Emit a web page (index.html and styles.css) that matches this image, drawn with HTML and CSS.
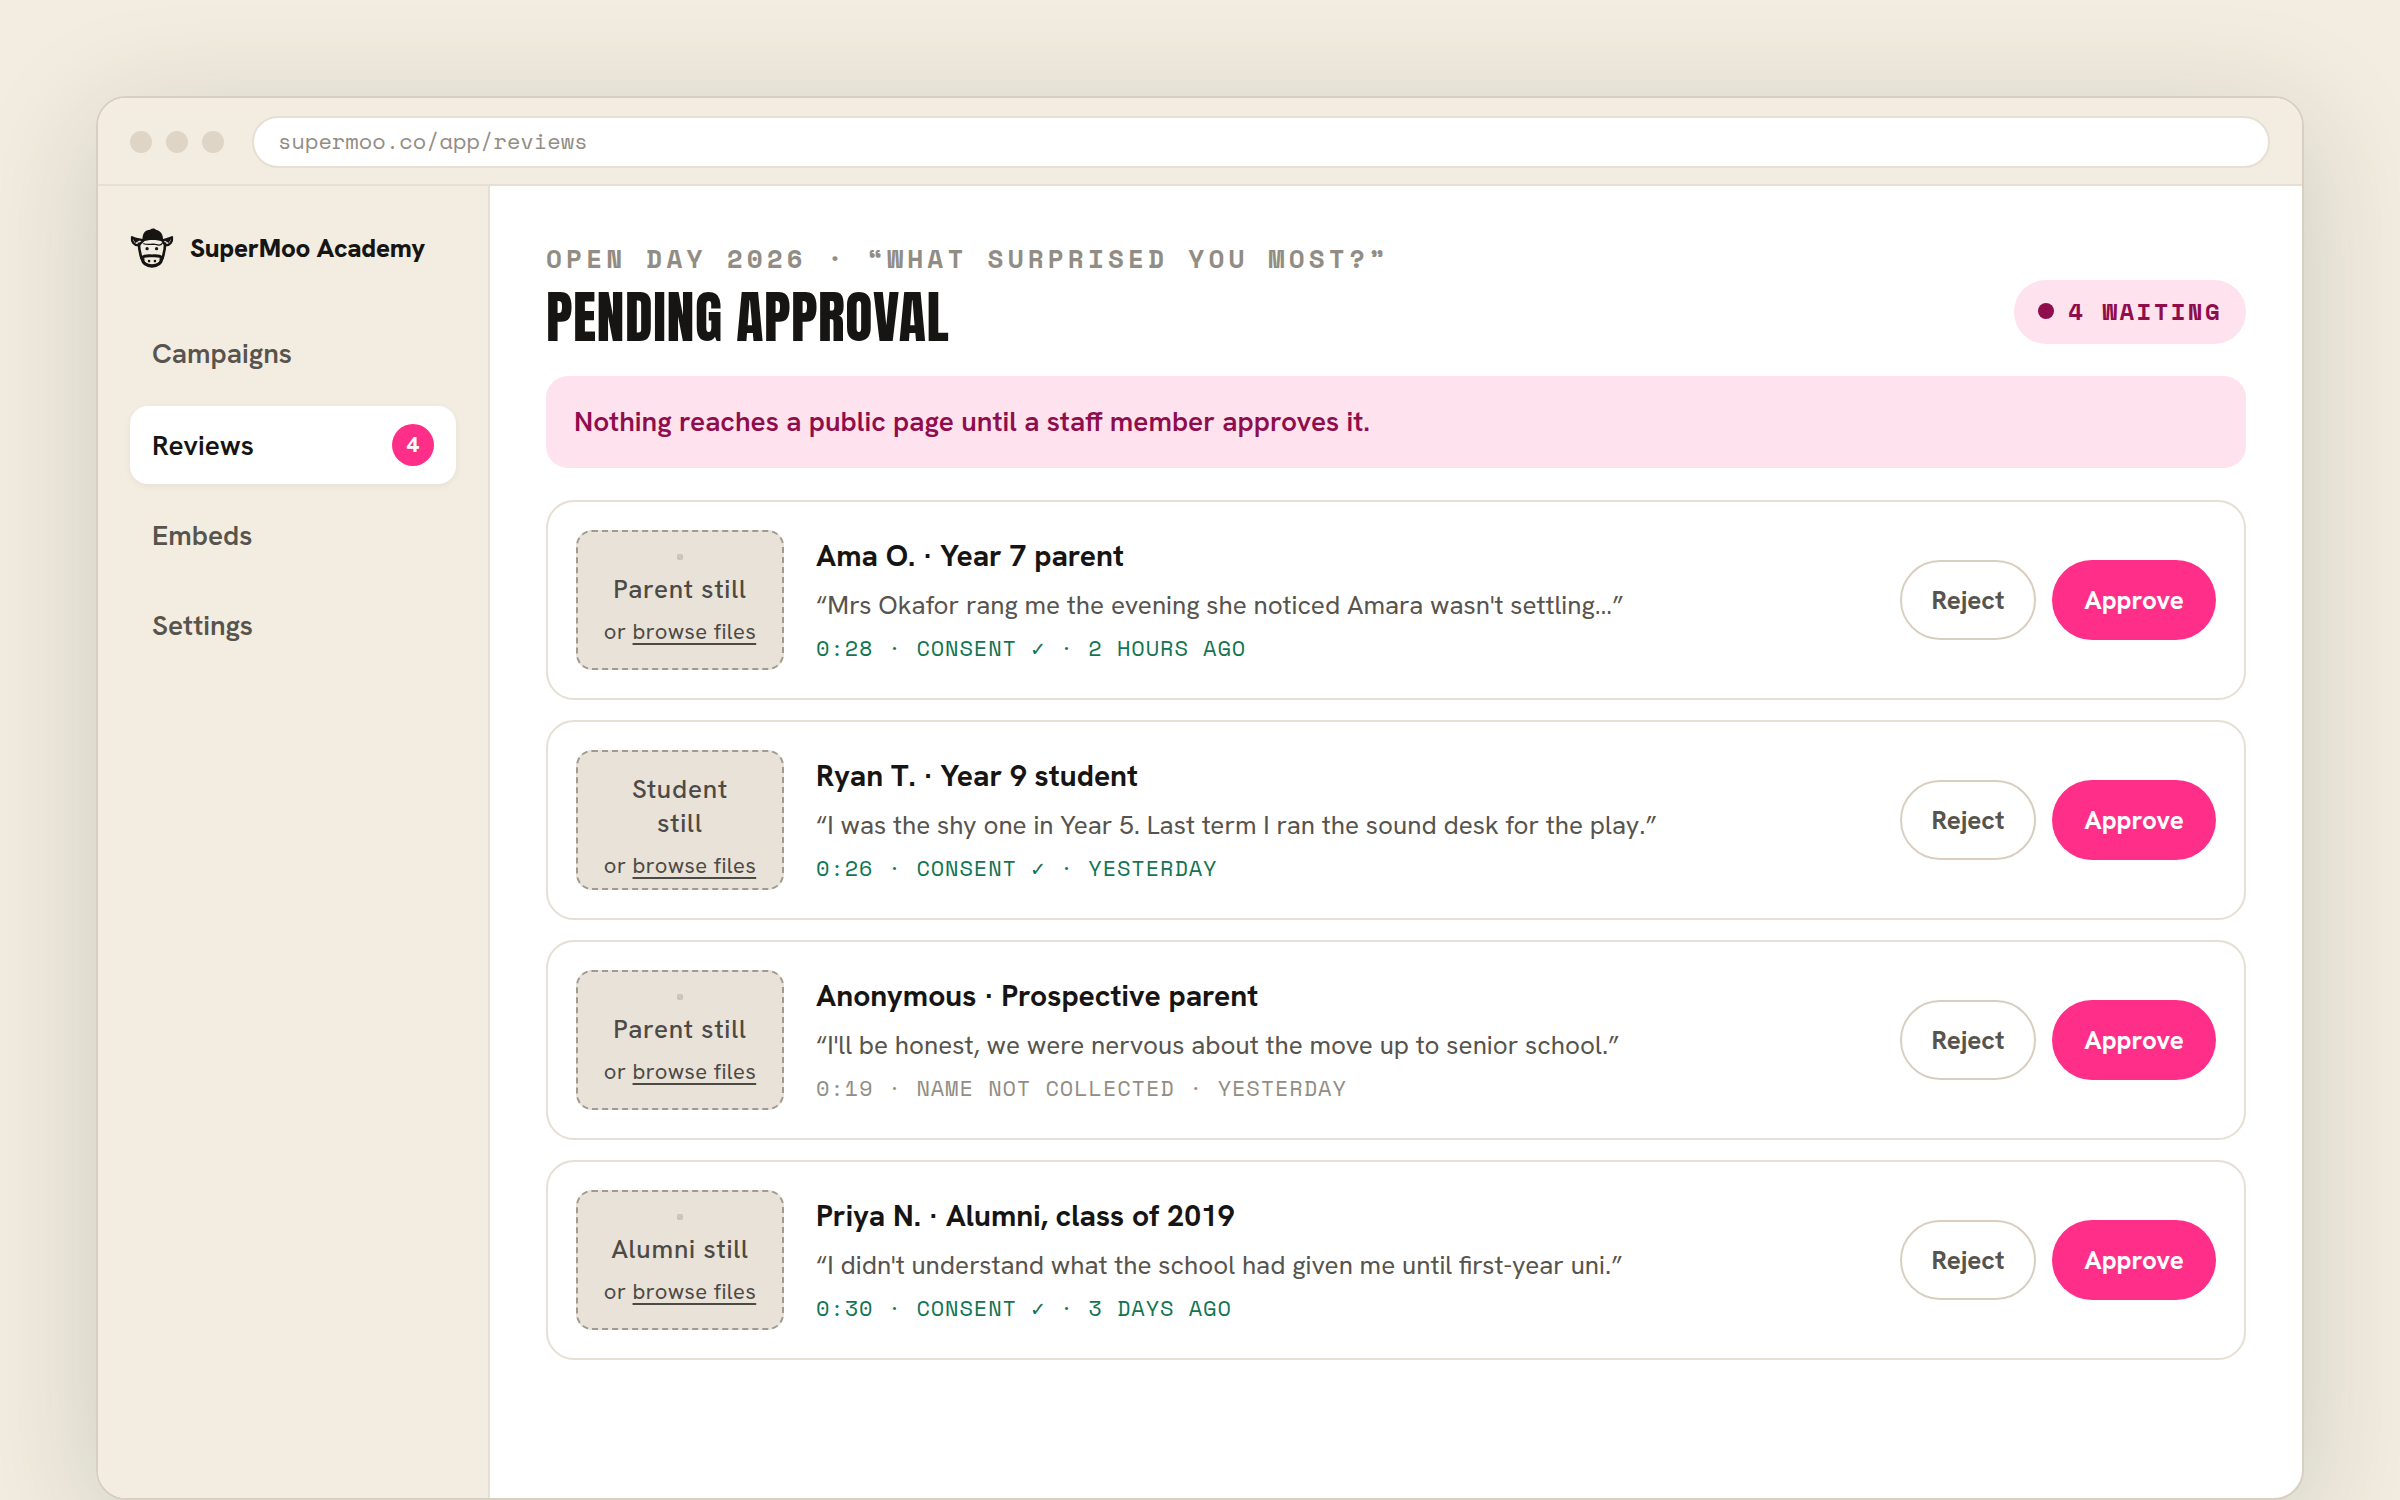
FILE: index.html
```html
<!DOCTYPE html>
<html lang="en">
<head>
    <meta charset="UTF-8">
    <meta name="viewport" content="width=device-width, initial-scale=1.0">
    <title>Reviews - SuperMoo Academy</title>
    <link rel="stylesheet" href="styles.css">
</head>
<body>
    <div class="window">
        <!-- Browser bar -->
        <div class="topbar">
            <div class="dots">
                <span class="dot"></span>
                <span class="dot"></span>
                <span class="dot"></span>
            </div>
            <input class="address" type="text" value="supermoo.co/app/reviews" aria-label="Address">
        </div>

        <div class="app">
            <!-- Sidebar -->
            <aside class="sidebar">
                <div class="brand">
                    <svg class="logo" viewBox="0 0 132 122" aria-hidden="true">
                        <path d="M37 42C35 14 46 6 60 5C66 0 74 0 78 5C92 8 101 18 100 42C84 35 54 34 37 42Z" fill="#161513"/>
                        <path d="M40 38C28 35 14 33 5 28C3 42 11 53 25 53Z M97 38C106 35 118 33 127 28C129 42 121 53 107 53Z" fill="#f3ece0" stroke="#161513" stroke-width="7" stroke-linejoin="round"/>
                        <path d="M5 28L28 38L15 46Z M127 28L104 38L117 46Z" fill="#161513"/>
                        <path d="M26 44C26 62 29 78 34 92C38 108 50 117 66 117C82 117 94 108 98 92C103 78 106 62 106 44" fill="none" stroke="#161513" stroke-width="8"/>
                        <path d="M41 48C51 53 65 48 77 50C86 51 90 57 97 47" fill="none" stroke="#161513" stroke-width="4" stroke-linecap="round"/>
                        <path d="M33 94C38 83 51 85 66 85C81 85 94 83 99 94" fill="none" stroke="#161513" stroke-width="9"/>
                        <path d="M41 92C37 104 49 113 66 113C83 113 95 104 91 92" fill="none" stroke="#161513" stroke-width="5"/>
                        <circle cx="51" cy="63" r="5" fill="#161513"/>
                        <circle cx="80" cy="63" r="5" fill="#161513"/>
                        <circle cx="57" cy="101" r="4" fill="#161513"/>
                        <circle cx="75" cy="101" r="4" fill="#161513"/>
                    </svg>
                    <span>SuperMoo Academy</span>
                </div>
                <nav class="menu">
                    <a href="#campaigns">Campaigns</a>
                    <a href="#reviews" class="active">Reviews <span class="count">4</span></a>
                    <a href="#embeds">Embeds</a>
                    <a href="#settings">Settings</a>
                </nav>
            </aside>

            <!-- Reviews waiting for approval -->
            <main class="content">
                <header class="header">
                    <div>
                        <p class="eyebrow">OPEN DAY 2026 · “WHAT SURPRISED YOU MOST?”</p>
                        <h1>PENDING APPROVAL</h1>
                    </div>
                    <span class="waiting">4 WAITING</span>
                </header>

                <p class="notice">Nothing reaches a public page until a staff member approves it.</p>

                <div class="reviews">
                    <article class="review">
                        <div class="thumb">
                            <svg class="thumb-icon" viewBox="0 0 12 12" aria-hidden="true"><rect x="1" y="1" width="10" height="10" rx="2"/><path d="M2 10L7 5L10 8"/></svg>
                            <span class="thumb-label">Parent still</span>
                            <span class="thumb-sub">or <a href="#browse">browse files</a></span>
                        </div>
                        <div class="info">
                            <h2>Ama O. · Year 7 parent</h2>
                            <p class="quote">“Mrs Okafor rang me the evening she noticed Amara wasn't settling…”</p>
                            <p class="meta">0:28 · CONSENT ✓ · 2 HOURS AGO</p>
                        </div>
                        <div class="actions">
                            <button class="reject" type="button">Reject</button>
                            <button class="approve" type="button">Approve</button>
                        </div>
                    </article>

                    <article class="review">
                        <div class="thumb">
                            <svg class="thumb-icon collapsed" viewBox="0 0 12 12" aria-hidden="true"></svg>
                            <span class="thumb-label">Student still</span>
                            <span class="thumb-sub">or <a href="#browse">browse files</a></span>
                        </div>
                        <div class="info">
                            <h2>Ryan T. · Year 9 student</h2>
                            <p class="quote">“I was the shy one in Year 5. Last term I ran the sound desk for the play.”</p>
                            <p class="meta">0:26 · CONSENT ✓ · YESTERDAY</p>
                        </div>
                        <div class="actions">
                            <button class="reject" type="button">Reject</button>
                            <button class="approve" type="button">Approve</button>
                        </div>
                    </article>

                    <article class="review">
                        <div class="thumb">
                            <svg class="thumb-icon" viewBox="0 0 12 12" aria-hidden="true"><rect x="1" y="1" width="10" height="10" rx="2"/><path d="M2 10L7 5L10 8"/></svg>
                            <span class="thumb-label">Parent still</span>
                            <span class="thumb-sub">or <a href="#browse">browse files</a></span>
                        </div>
                        <div class="info">
                            <h2>Anonymous · Prospective parent</h2>
                            <p class="quote">“I'll be honest, we were nervous about the move up to senior school.”</p>
                            <p class="meta muted">0:19 · NAME NOT COLLECTED · YESTERDAY</p>
                        </div>
                        <div class="actions">
                            <button class="reject" type="button">Reject</button>
                            <button class="approve" type="button">Approve</button>
                        </div>
                    </article>

                    <article class="review">
                        <div class="thumb">
                            <svg class="thumb-icon" viewBox="0 0 12 12" aria-hidden="true"><rect x="1" y="1" width="10" height="10" rx="2"/><path d="M2 10L7 5L10 8"/></svg>
                            <span class="thumb-label">Alumni still</span>
                            <span class="thumb-sub">or <a href="#browse">browse files</a></span>
                        </div>
                        <div class="info">
                            <h2>Priya N. · Alumni, class of 2019</h2>
                            <p class="quote">“I didn't understand what the school had given me until first-year uni.”</p>
                            <p class="meta">0:30 · CONSENT ✓ · 3 DAYS AGO</p>
                        </div>
                        <div class="actions">
                            <button class="reject" type="button">Reject</button>
                            <button class="approve" type="button">Approve</button>
                        </div>
                    </article>
                </div>
            </main>
        </div>
    </div>
</body>
</html>
```
FILE: styles.css
```css
* {
    margin: 0;
    padding: 0;
    box-sizing: border-box;
}

body {
    min-height: 100vh;
    padding: 96px 96px 0;
    display: flex;
    background: #f3ece0;
    color: #161513;
    font-family: 'Hanken Grotesk', 'Roboto', 'Liberation Sans', sans-serif;
    font-size: 26px;
}

/* Browser window */
.window {
    flex: 1;
    display: flex;
    flex-direction: column;
    overflow: hidden;
    background: #fff;
    border: 2px solid #d9cfc1;
    border-radius: 30px;
    box-shadow: 0 24px 120px rgba(30, 60, 50, 0.18);
}

.topbar {
    display: flex;
    align-items: center;
    gap: 28px;
    padding: 18px 32px 16px;
    background: #f3ece0;
    border-bottom: 2px solid #e6dfd3;
}

.dots {
    display: flex;
    gap: 14px;
}

.dot {
    width: 22px;
    height: 22px;
    border-radius: 50%;
    background: #ded5c7;
}

.address {
    flex: 1;
    min-width: 0;
    height: 52px;
    padding: 0 24px 4px;
    background: #fff;
    border: 2px solid #e6dfd3;
    border-radius: 26px;
    color: #928d84;
    font-family: 'Space Mono', 'Liberation Mono', monospace;
    font-size: 22px;
}

.app {
    flex: 1;
    display: flex;
}

/* Sidebar */
.sidebar {
    flex: none;
    width: 392px;
    padding: 40px 32px;
    background: #f3ece0;
    border-right: 2px solid #e6dfd3;
}

.brand {
    display: flex;
    align-items: center;
    gap: 16px;
    height: 44px;
    margin-bottom: 46px;
    font-weight: 800;
    letter-spacing: -0.01em;
}

.logo {
    width: 44px;
    height: 40px;
}

.menu {
    display: flex;
    flex-direction: column;
    gap: 14px;
}

.menu a {
    display: flex;
    align-items: center;
    justify-content: space-between;
    height: 76px;
    padding: 0 22px 2px;
    border-radius: 18px;
    color: #57534d;
    font-size: 28px;
    font-weight: 600;
    text-decoration: none;
}

.menu a.active {
    height: 78px;
    padding-bottom: 0;
    background: #fff;
    color: #161513;
    box-shadow: 0 2px 6px rgba(30, 60, 50, 0.06);
}

.count {
    width: 42px;
    border-radius: 50%;
    background: #ff2e88;
    color: #fff;
    font-size: 22px;
    font-weight: 800;
    line-height: 42px;
    text-align: center;
}

/* Main column */
.content {
    flex: 1;
    min-width: 0;
    padding: 56px;
}

.header {
    display: flex;
    align-items: flex-end;
    justify-content: space-between;
    margin-bottom: 32px;
}

.eyebrow {
    color: #928d84;
    font-family: 'Space Mono', 'Liberation Mono', monospace;
    font-size: 26px;
    font-weight: 700;
    letter-spacing: 0.16em;
    line-height: 32px;
}

h1 {
    margin-top: 16px;
    font-family: 'Anton', 'Roboto', sans-serif;
    font-size: 56px;
    font-weight: 400;
    letter-spacing: 0.01em;
    line-height: 54px;
}

.waiting {
    display: flex;
    align-items: center;
    gap: 14px;
    height: 64px;
    padding: 0 24px 2px;
    border-radius: 32px;
    background: #fee2ed;
    color: #8f0d4c;
    font-family: 'Space Mono', 'Liberation Mono', monospace;
    font-size: 24px;
    font-weight: 700;
    letter-spacing: 0.1em;
}

.waiting::before {
    content: "";
    width: 16px;
    height: 16px;
    border-radius: 50%;
    background: #8f0d4c;
}

.notice {
    margin-bottom: 32px;
    padding: 26px 28px 28px;
    border-radius: 22px;
    background: #fee2ed;
    color: #8f0d4c;
    font-size: 28px;
    font-weight: 600;
    line-height: 38px;
}

.reviews {
    display: flex;
    flex-direction: column;
    gap: 20px;
}

.review {
    display: flex;
    align-items: center;
    gap: 32px;
    padding: 28px;
    border: 2px solid #e6dfd3;
    border-radius: 28px;
}

/* Video still drop area */
.thumb {
    flex: none;
    display: flex;
    flex-direction: column;
    align-items: center;
    justify-content: center;
    gap: 12px;
    width: 208px;
    height: 140px;
    padding: 0 28px;
    border: 2px dashed #a09a90;
    border-radius: 16px;
    background: #e9e2d8;
    color: #4d4a45;
    text-align: center;
}

.thumb-icon {
    width: 6px;
    height: 6px;
    fill: #cfcac0;
    stroke: #b5b0a6;
    stroke-width: 1;
}

.thumb-icon.collapsed {
    height: 0;
}

.thumb-label {
    font-weight: 500;
    letter-spacing: 0.03em;
    line-height: 34px;
}

.thumb-sub {
    font-size: 22px;
    letter-spacing: 0.02em;
    line-height: 28px;
    white-space: nowrap;
}

.thumb-sub a {
    color: inherit;
    text-decoration-thickness: 2px;
    text-underline-offset: 4px;
}

.info {
    flex: 1;
    min-width: 0;
}

h2 {
    font-size: 30px;
    font-weight: 700;
    line-height: 40px;
    margin-bottom: 10px;
}

.quote {
    color: #57534d;
    line-height: 38px;
    margin-bottom: 8px;
}

.meta {
    color: #127552;
    font-family: 'Space Mono', 'Liberation Mono', monospace;
    font-size: 22px;
    letter-spacing: 0.04em;
    line-height: 32px;
}

.meta.muted {
    color: #928d84;
}

.actions {
    display: flex;
    gap: 16px;
}

.actions button {
    height: 80px;
    border-radius: 40px;
    font: inherit;
    font-weight: 700;
    cursor: pointer;
}

.reject {
    width: 136px;
    background: #fff;
    border: 2px solid #d9cfc1;
    color: #57534d;
}

.approve {
    width: 164px;
    background: #ff2e88;
    border: none;
    color: #fff;
}
```
